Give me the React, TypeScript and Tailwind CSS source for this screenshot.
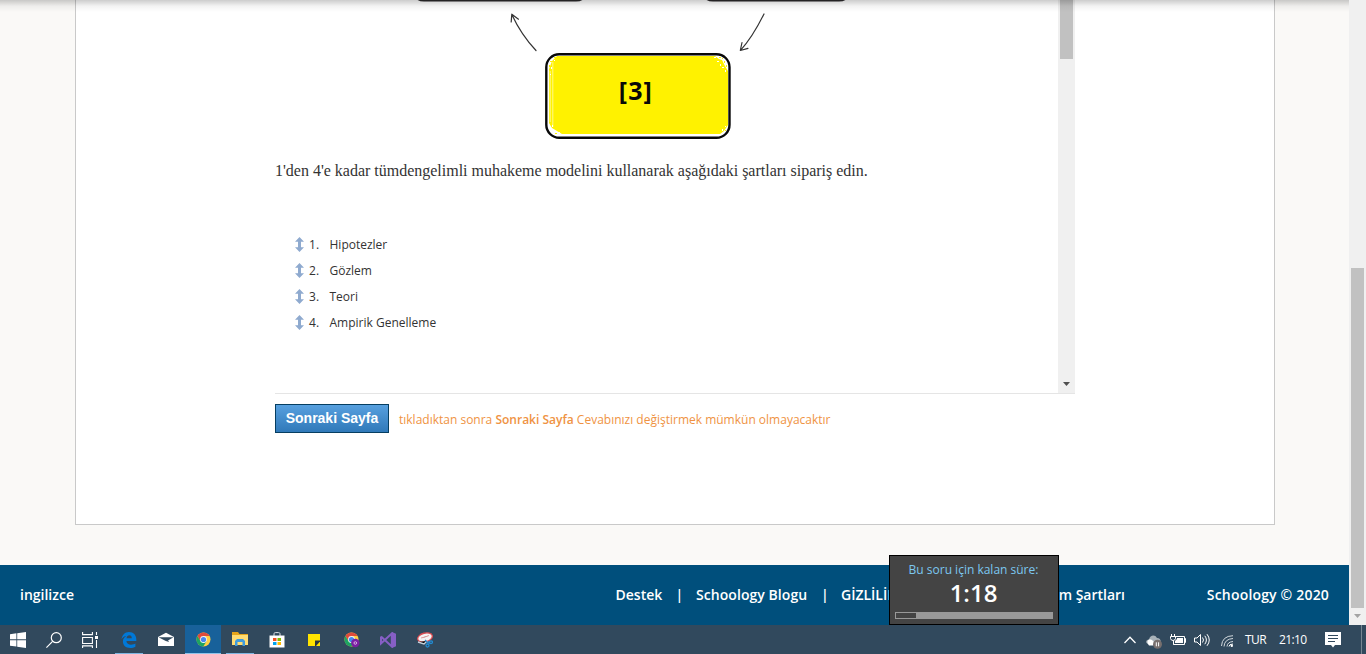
import React from 'react';

const terms = ['Hipotezler', 'Gözlem', 'Teori', 'Ampirik Genelleme'];

function Diagram() {
  return (
    <svg className="block h-[150px] w-[783px] shrink-0" viewBox="275 0 783 150" fill="none">
      <path d="M415 -6Q416 .5 424 .5H576Q584 .5 585 -6M704 -6Q705 .5 713 .5H839Q847 .5 848 -6" stroke="#2c2a2c" strokeWidth="2" />
      <g stroke="#333" strokeWidth="1.2" strokeLinecap="round" strokeLinejoin="round">
        <path d="M536 50.5C527 41 519 30 511.8 14.5M511.2 22L511.8 14.2L518.5 19.2" />
        <path d="M764 14C757 28 751 39 740.5 50.3M742 42.5L740.3 50.5L748 48.3" />
      </g>
      <rect x="546.3" y="54.2" width="183.2" height="83.6" rx="13" fill="#fff" stroke="#090909" strokeWidth="2.4" />
      <path d="M557 56H715L719 59L722 60L725 66L728 71V125L724 131L720 134H562L557 131L552 128L549 123V69L552 61Z" fill="#fff200" />
      <path d="M550.2 71V122M552.8 62V127" stroke="#fffbb0" strokeWidth=".8" />
      <g fill="#fff200">
        <path d="M550 61h2v1h-2zM549 65h1v2h-1zM554 57h2v1h-2zM719 57h2v1h-2zM724 61h1v2h-1zM726 65h1v2h-1zM722 58h1v1h-1zM725 130h1v1h-1zM555 133h2v1h-2z" />
      </g>
      <path d="M714 57h2v1h-2zM717 61h2v1h-2zM720 64h1v2h-1zM722 67h2v1h-2zM725 70h1v2h-1zM551 67h1v2h-1zM554 60h1v1h-1zM550 74h1v1h-1zM722 129h1v2h-1zM725 126h1v1h-1zM552 125h1v2h-1zM558 132h2v1h-2z" fill="#fff" />
      <text x="635.3" y="99.8" textAnchor="middle" textLength="33" className="fill-[#080808] font-['Open_Sans',sans-serif] text-[25px] font-bold">[3]</text>
    </svg>
  );
}

function MoveIcon() {
  return (
    <svg className="-mt-[2px] h-[15px] w-[9px]" viewBox="0 0 9 15" fill="#8faacf">
      <path d="M4.5 0L9 4.8H6V10.2H9L4.5 15L0 10.2H3V4.8H0Z" />
    </svg>
  );
}

function Chrome({ badge = false }: { badge?: boolean }) {
  return (
    <svg className="mt-px ml-px h-4 w-4" viewBox="0 0 16 16">
      <circle cx="7.5" cy="7.5" r="7" fill="#ffce43" />
      <path d="M1.4 4A7 7 0 0 1 13.6 4H7.5L4.5 9.3Z" fill="#df4b3c" />
      <path d="M1.4 4A7 7 0 0 0 7.3 14.5L10.5 9.3H4.5Z" fill="#1da462" />
      <circle cx="7.5" cy="7.5" r="3.4" fill="#f5f5f5" />
      <circle cx="7.5" cy="7.5" r="2.6" fill="#4688f1" />
      {badge && (
        <>
          <circle cx="11.3" cy="11" r="4.2" fill="#7b1fa2" />
          <circle cx="11.3" cy="11" r="1.3" fill="none" stroke="#e8cdf2" strokeWidth=".8" />
        </>
      )}
    </svg>
  );
}

function Taskbar() {
  return (
    <div className="flex h-[29px] w-full items-stretch bg-[#31495d] text-white">
      <div className="flex w-9 items-center justify-center">
        <svg className="h-4 w-4" viewBox="0 0 16 16" fill="#fff"><path d="M0 2.2L6.4 1.3V7.3H0ZM7.2 1.2L16 0V7.3H7.2ZM0 8.3H6.4V14.5L0 13.7ZM7.2 8.3H16V16L7.2 14.7Z" /></svg>
      </div>
      <div className="flex w-9 items-center justify-center">
        <svg className="h-4 w-4" viewBox="0 0 16 16" fill="none" stroke="#fff" strokeWidth="1.2"><circle cx="10.3" cy="5.7" r="5" /><path d="M6.6 9.3L.4 15.6" /></svg>
      </div>
      <div className="flex w-9 items-center justify-center">
        <svg className="h-4 w-4" viewBox="0 0 16 16" fill="none" stroke="#fff" strokeWidth="1.1"><path d="M.6 0V2.6H10.4V0M.6 5.5H10.4V11.5H.6ZM.6 16V13.9H10.4V16M14.5 0V3M14.5 8V16" /><path d="M13 4h3v3h-3z" fill="#fff" stroke="none" /></svg>
      </div>
      <div className="ml-[7px] flex w-7 items-center justify-center border-b border-[#7eb6e2]">
        <svg className="mt-px h-4 w-4" viewBox="0 0 16 16" fill="#0078d7"><path d="M.5 7.2C1.2 2.8 4 0 8 0C12.5 0 15.3 3.2 15.3 7.3V9.1H5.4C5.6 11.7 7.7 12.7 10 12.7C11.8 12.7 13.3 12.2 14.4 11.5V14.8C13 15.6 11.2 16 9.2 16C4.8 16 1.9 13.4 1.9 9.6C1.9 7.2 3.2 5.2 5.4 4.1C3.3 4.3 1.5 5.4.5 7.2ZM5.5 6.2H10.8C10.8 4.4 10 3.3 8.4 3.3C6.8 3.3 5.8 4.4 5.5 6.2Z" /></svg>
      </div>
      <div className="ml-1 flex w-[38px] items-center justify-center">
        <svg className="h-4 w-4" viewBox="0 0 16 16"><path d="M0 5L8 .8L16 5V14H0Z" fill="#fff" /><path d="M.5 5.2H15.5L10 8.5L11.2 10L7.8 9Z" fill="#31495d" /></svg>
      </div>
      <div className="flex w-9 items-center justify-center border-b border-[#8fc3e9] bg-[#18619a]"><Chrome /></div>
      <div className="ml-[5px] flex w-7 items-center justify-center border-b border-[#7eb6e2]">
        <svg className="h-4 w-4" viewBox="0 0 16 16"><path d="M0 1H6L7.5 3H16V14H0Z" fill="#e6a51b" /><path d="M0 4H16V14H0Z" fill="#ffdc72" /><path d="M3 15V10L5 8H11L13 10V15H10.5V11H5.5V15Z" fill="#3f9bdc" /></svg>
      </div>
      <div className="ml-[5px] flex w-9 items-center justify-center">
        <svg className="h-4 w-4" viewBox="0 0 16 16"><path d="M5 4V1.8C5 .7 6 .6 7 .6H9.5C10.5 .6 11 1 11 2V4" fill="none" stroke="#dce3e8" /><path d="M.5 3.5H15.5V15.5H.5Z" fill="#fff" /><path d="M4 6h3.5v3H4z" fill="#f25022" /><path d="M8.5 6H12v3H8.5z" fill="#7fba00" /><path d="M4 10h3.5v3H4z" fill="#00a4ef" /><path d="M8.5 10H12v3H8.5z" fill="#ffb900" /></svg>
      </div>
      <div className="flex w-[38px] items-center justify-center">
        <svg className="h-3 w-3" viewBox="0 0 12 12"><path d="M0 0H12V12H0Z" fill="#ffe400" /><path d="M7 6.5H12V7.5L8 12H7Z" fill="#28363f" /></svg>
      </div>
      <div className="flex w-9 items-center justify-center"><Chrome badge /></div>
      <div className="flex w-[38px] items-center justify-center">
        <svg className="h-4 w-4" viewBox="0 0 16 16" fill="none" stroke="#865fc5" strokeWidth="2"><path d="M1 4.5V11.5L11.8 1.5V14.5L1 4.5" /><path d="M12 0L16 1.7V14.3L12 16Z" fill="#865fc5" stroke="none" /></svg>
      </div>
      <div className="flex w-9 items-center justify-center">
        <svg className="h-4 w-4" viewBox="0 0 16 16"><ellipse cx="8" cy="5.5" rx="7.5" ry="4.4" transform="rotate(-15 8 5.5)" fill="#f4f2f2" stroke="#d94b51" strokeWidth="1.3" /><path d="M1 10L7 12L10 9" stroke="#c6d2dc" strokeWidth="1.4" /><path d="M4 6L8 5L12 3.5" stroke="#e28c8e" strokeWidth=".8" /><g fill="none" stroke="#228bd1" strokeWidth="1.3"><path d="M8 8L11 11M12 9V12" /><circle cx="10.5" cy="13.5" r="1.5" /><circle cx="14" cy="10.2" r="1.4" /></g></svg>
      </div>
      <div className="ml-auto flex items-center">
        <svg className="h-2 w-3" viewBox="0 0 12 8" fill="none" stroke="#fff" strokeWidth="1.3"><path d="M.5 7L6 1.2L11.5 7" /></svg>
        <svg className="ml-[10px] mt-1 h-[14px] w-4" viewBox="0 0 16 14"><path d="M2 9C-1 8 0 4.5 3 4.5C4 0 9 -1 11 3C14 3 15 5 14.5 8L7 10Z" fill="#a8b2b9" /><path d="M2 9C0 5 4 3 7 6L10 9L7 10.5H3Z" fill="#fff" /><circle cx="11.5" cy="9.3" r="4.5" fill="#776f6e" /><path d="M10.3 7.3V11.3M12.6 7.3V11.3" stroke="#fff" /></svg>
        <svg className="ml-2 h-3 w-4" viewBox="0 0 16 12" fill="none" stroke="#fff"><path d="M5 2.5H14.5V10.5H3.5V7M14.5 4.5H15.5V8.5H14.5M1.5 0V2M4.5 0V2M.5 2.5H5.5V4.5Q5 6.5 3 6.5Q1 6.5.5 4.5ZM3.5 6.5V10.5" /><path d="M7 4H13V9H5V7L7 5Z" fill="#fff" stroke="none" /></svg>
        <svg className="ml-2 h-[14px] w-4" viewBox="0 0 16 14" fill="none" stroke="#fff" strokeWidth="1"><path d="M.5 5H3L6.5 1.5V12.5L3 9H.5ZM8.5 4.5Q10.5 7 8.5 9.5M10.8 2.8Q14 7 10.8 11.2M13 1.2Q17.5 7 13 12.8" /></svg>
        <svg className="ml-[11px] mt-[2px] h-3 w-3" viewBox="0 0 12 12" fill="none" stroke="#d2d9dd" strokeWidth="1"><path d="M.5 11Q1 1 12 .7M3 11.5Q3.5 4 12 3.5M6 11.5Q6.3 7 12 6.5" /><path d="M8 11.5Q8 9 12 9" stroke="#fff" /><circle cx="10.8" cy="10.8" r="1.2" fill="#fff" stroke="none" /></svg>
        <span className="ml-3 w-[34px] whitespace-nowrap font-['Open_Sans',sans-serif] text-xs tracking-[-0.5px]">TUR</span>
        <span className="w-[46px] whitespace-nowrap font-['Open_Sans',sans-serif] text-xs tracking-[-0.6px]">21:10</span>
        <svg className="mt-px h-4 w-4" viewBox="0 0 16 16"><path d="M0 0H16V13H10L8 15.5L6 13H0Z" fill="#fff" /><path d="M3 3.5H13M3 6.5H13M3 9.5H10" stroke="#31495d" /></svg>
        <span className="ml-5 h-[29px] w-[5px] border-l border-[#768692]" />
      </div>
    </div>
  );
}

function Timer() {
  return (
    <div className="absolute left-[889px] top-[555px] flex h-[70px] w-[170px] flex-col items-center border border-black bg-[#444] font-['Open_Sans',sans-serif]">
      <div className="mt-[6px] whitespace-nowrap pr-px text-xs leading-4 text-[#7cc8f1]">Bu soru için kalan süre:</div>
      <div className="mt-px pr-px text-[24px] font-semibold leading-[28px] text-white">1:18</div>
      <div className="mt-[5px] h-[7px] w-[158px] border border-[#999] bg-[#999]"><div className="h-[5px] w-5 bg-[#444]" /></div>
    </div>
  );
}

export default function App() {
  return (
    <div className="relative flex h-[654px] w-[1366px] flex-col overflow-hidden bg-[#faf9f7]">
      <div className="flex h-[625px]">
        <div className="relative flex w-[1349px] flex-col">
          <main className="mx-auto mr-[74px] h-[525px] w-[1200px] border-x border-b border-[#c9c9c9] bg-white pl-[199px]">
            <section className="flex h-[394px] w-[800px] border-b border-[#e5e5e5]">
              <div className="w-[783px]">
                <Diagram />
                <p className="mt-[11px] h-5 whitespace-nowrap font-['Liberation_Serif',serif] text-base leading-5 tracking-[-0.01px] text-[#333]">1'den 4'e kadar tümdengelimli muhakeme modelini kullanarak aşağıdaki şartları sipariş edin.</p>
                <ol className="mt-[51px] pl-5 font-['Open_Sans',sans-serif] text-xs text-[#333]">
                  {terms.map((term, index) => (
                    <li key={term} className="flex h-[26px] items-center">
                      <MoveIcon />
                      <span className="ml-[5px] w-[20.5px]">{index + 1}.</span>
                      <span>{term}</span>
                    </li>
                  ))}
                </ol>
              </div>
              <div className="flex w-[17px] flex-col items-center bg-[#f0f0f0]">
                <div className="h-[59px] w-[13px] bg-[#c1c1c1]" />
                <svg className="mt-auto mb-[7px] h-1 w-[7px]" viewBox="0 0 7 4" fill="#505050"><path d="M0 0H7L3.5 4Z" /></svg>
              </div>
            </section>
            <div className="mt-[10px] flex items-start">
              <button className="h-[29px] w-[114px] whitespace-nowrap border border-[#063e61] bg-linear-to-b from-[#57a0df] to-[#3079b9] pb-[2px] font-['Liberation_Sans',sans-serif] text-[14px] font-bold leading-[26px] text-white"><span>Sonraki Sayfa</span></button>
              <p className="ml-[10px] mt-[6px] whitespace-nowrap font-['Open_Sans',sans-serif] text-xs leading-5 text-[#ef9343]">tıkladıktan sonra <strong className="font-semibold">Sonraki Sayfa</strong> Cevabınızı değiştirmek mümkün olmayacaktır</p>
            </div>
          </main>
          <footer className="mt-10 flex h-[60px] items-center whitespace-nowrap bg-[#004f7c] px-5 font-['Open_Sans',sans-serif] text-sm font-semibold text-white">
            <span className="w-[595.5px]">ingilizce</span>
            <span className="w-[60px]">Destek</span>
            <span className="w-[20.5px]">|</span>
            <span className="w-[125px] tracking-[0.06px]">Schoology Blogu</span>
            <span className="w-5">|</span>
            <span className="w-[180px]">GİZLİLİK</span>
            <span className="flex w-[104px] justify-end">Kullanım Şartları</span>
            <span className="ml-auto tracking-[0.18px]">Schoology © 2020</span>
          </footer>
          <div className="absolute inset-x-0 top-0 h-3 bg-linear-to-b from-black/20 via-black/5 to-transparent" />
        </div>
        <div className="flex w-[17px] flex-col items-center bg-[#f0f0f0] pt-[268px]">
          <div className="h-[340px] w-[13px] bg-[#c1c1c1]" />
          <svg className="mt-[6px] h-1 w-[7px]" viewBox="0 0 7 4" fill="#a3a3a3"><path d="M0 0H7L3.5 4Z" /></svg>
        </div>
      </div>
      <Taskbar />
      <Timer />
    </div>
  );
}
